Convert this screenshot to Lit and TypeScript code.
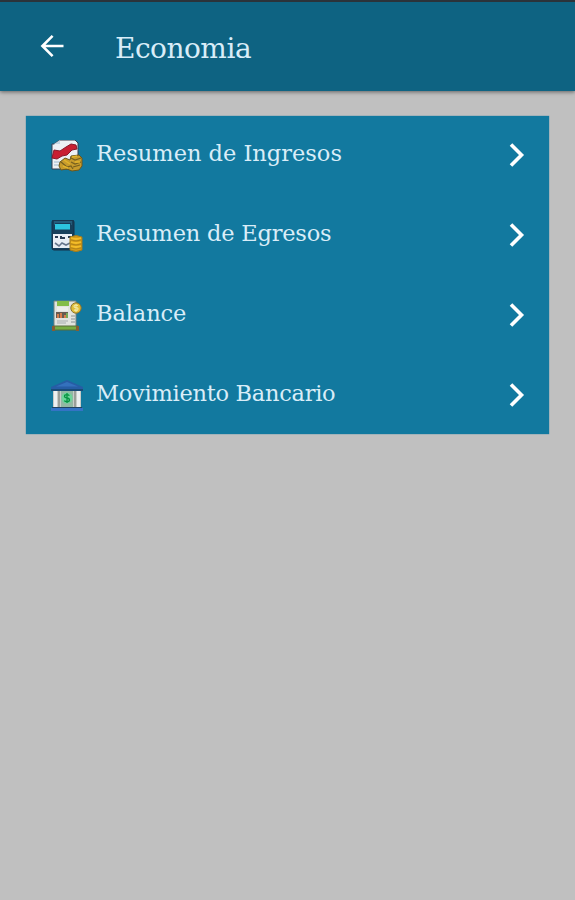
import { LitElement, html, css, svg } from "lit";
import { customElement } from "lit/decorators.js";
import { styleMap } from "lit/directives/style-map.js";

const report = svg`
  <path d="M3 4 9 0h15l3 3v26H1V4z" fill="#edf0f5" stroke="#343d50" stroke-width="1"/>
  <path d="M3 4h6V0" fill="#c4d6e3"/>
  <path d="m3 10 6 1 6-4 5-3 5 1 1 4-5 1-5 5-5 1-5 3-5-1z" fill="#c91e32" stroke="#88182b"/>
  <path d="M3 22h7M3 25h6" stroke="#b6c9da" stroke-width="1.5"/>
  <path d="m9 22 5-4 5 2 1-4 8-1 3 3v8l-3 4-7 1-5-2-6 1-2-4z" fill="#c79b2c" stroke="#6c561b"/>
  <path d="m10 22 6 5 4-1 2 3M20 18l4 2 6-2M20 22l4 2 6-2M22 27l7-2" fill="none" stroke="#76601f" stroke-width="1.2"/>
  <path d="m13 20 6 4M21 17l5-1M12 26l5 2M24 22h5" stroke="#e2b52c" stroke-width="1.5"/>`;

const calculator = svg`
  <rect x="1" y="0" width="22" height="30" rx="2" fill="#163f5b" stroke="#173149"/>
  <path d="M3 2h18M3 4h1M20 4h1" stroke="#347b9b"/>
  <rect x="4" y="4" width="15" height="5.5" fill="#2cc5df"/>
  <path d="M2 14h19v14H2z" fill="#e7edf4"/>
  <path d="M4 17h3M10 16v2h4M17 17h3" stroke="#293b52" stroke-width="2" fill="none"/>
  <path d="m4 23 4 3 3-3 4 2 4-2" fill="none" stroke="#65758b" stroke-width="1.6"/>
  <path d="M19 17q6-3 12 0v13q-6 3-12 0z" fill="#d69b17" stroke="#a17a1e"/>
  <path d="M20 18q5 2 10 0M20 22q5 2 10 0M20 26q5 2 10 0" fill="none" stroke="#f3bd29" stroke-width="1.8"/>
  <path d="M20 20q5 2 10 0M20 24q5 2 10 0M20 28q5 2 10 0" fill="none" stroke="#a97e19" stroke-width=".8"/>`;

const balance = svg`
  <path d="M3 1h22v28H3z" fill="#e1e3df" stroke="#75817e"/>
  <path d="M6 1h12v5H6z" fill="#83bd49"/>
  <path d="M6 8h11M6 10h11" stroke="#f8f8f5"/>
  <path d="M5 12h12v6H5z" fill="#665b51"/>
  <path d="M7 18v-4M10 18v-5M14 18v-3" stroke="#d57c4c" stroke-width="2"/>
  <path d="M16 13v5" stroke="#75a957" stroke-width="2"/>
  <path d="M6 21h11M6 23h9" stroke="#a7adaf"/>
  <path d="M20 16h4M20 19h4M20 22h4" stroke="#889294"/>
  <path d="M2 26h25v4H2z" fill="#77ad43" stroke="#596c3a"/>
  <path d="M1 26h3v5H1zM25 26h3v5h-3z" fill="#865d35"/>
  <circle cx="25" cy="8" r="5.2" fill="#dfbd38" stroke="#8a7431"/>
  <path d="M27 5.5q-4-1-4 1 0 1 2 1.2 3 .4 1.6 2.2-1.3 1-3.6 0M25 4v8" fill="none" stroke="#f1e9a2" stroke-width="1.2"/>`;

const bank = svg`
  <path d="M2 10h28v18H2z" fill="#c8cbc8"/>
  <path d="M3 10h3v17H3zM26 10h3v17h-3z" fill="#edf0f1"/>
  <path d="M7 10h2v17H7zM23 10h2v17h-2z" fill="#9a9f99"/>
  <path d="M10 11h12v16H10z" fill="#92b8a3"/>
  <path d="M0 7 16 0l16 7v2H0z" fill="#265da5"/>
  <path d="M5 6.5 16 2l11 4.5z" fill="#3471bd"/>
  <path d="M0 9h32v2H0z" fill="#194b78"/>
  <path d="M1 27h30v1H1z" fill="#214362"/>
  <path d="M0 28h32v3H0z" fill="#3473c5"/>
  <circle cx="16" cy="18" r="5.5" fill="#6dd59b"/>
  <path d="M18.4 15.6q-1-1-2.6-1-2.3 0-2.3 1.7 0 1.4 2.5 1.7 2.5.4 2.5 1.9 0 1.7-2.5 1.7-1.8 0-2.8-1M16 13v10" fill="none" stroke="#079342" stroke-width="1.3"/>`;

const entries = [
  { label: "Resumen de Ingresos", icon: report, tracking: 0 },
  { label: "Resumen de Egresos", icon: calculator, tracking: -0.2 },
  { label: "Balance", icon: balance, tracking: -0.1 },
  { label: "Movimiento Bancario", icon: bank, tracking: -0.27 },
];

@customElement("app-root")
export class AppRoot extends LitElement {
  static styles = css`
    :host {
      display: block;
      height: 900px;
      overflow: hidden;
      background: #c0c0c0;
      color: #d9edf8;
      font-family: "DejaVu Serif", serif;
    }
    .bar {
      box-sizing: border-box;
      height: 91px;
      border-top: 2px solid #2b333a;
      background: #0e6382;
      box-shadow: 0 1px 4px rgba(0, 0, 0, 0.5);
      display: flex;
      align-items: center;
      padding: 0 38px;
    }
    .back { display: block; width: 28px; height: 28px; margin-bottom: 2px; }
    .title {
      margin: 0 0 0 49px;
      font-size: 28px;
      line-height: 40px;
      font-weight: 400;
      letter-spacing: -0.5px;
      padding-top: 4px;
    }
    .menu {
      margin: 25px 26px 0;
      background: #12799f;
      box-shadow: 0 0 1px #12799f;
      height: 318px;
    }
    .row { display: flex; align-items: center; height: 80px; padding: 0 20px 0 25px; box-sizing: border-box; }
    .icon { width: 32px; height: 32px; flex: none; }
    .label {
      flex: 1;
      margin-left: 13px;
      font-size: 22.5px;
      line-height: 32px;
      white-space: nowrap;
      padding-bottom: 6px;
    }
    .arrow { width: 24px; height: 32px; flex: none; margin-bottom: 2px; }
  `;

  render() {
    return html`
      <header class="bar">
        <svg class="back" viewBox="0 0 28 28" fill="none" stroke="#fff" stroke-width="2.6">
          <path d="M25.5 14H5M14.6 3.8 4.4 14l10.2 10.2" />
        </svg>
        <h1 class="title">Economia</h1>
      </header>
      <nav class="menu">
        ${entries.map(
          (e) => html`<div class="row">
            <svg class="icon" viewBox="0 0 32 32">${e.icon}</svg>
            <span class="label" style=${styleMap({ letterSpacing: `${e.tracking}px` })}>${e.label}</span>
            <svg class="arrow" viewBox="0 0 24 32" fill="none" stroke="#fff" stroke-width="3.6">
              <path d="m6 5.5 10.5 10.5L6 26.5" />
            </svg>
          </div>`,
        )}
      </nav>
    `;
  }
}
